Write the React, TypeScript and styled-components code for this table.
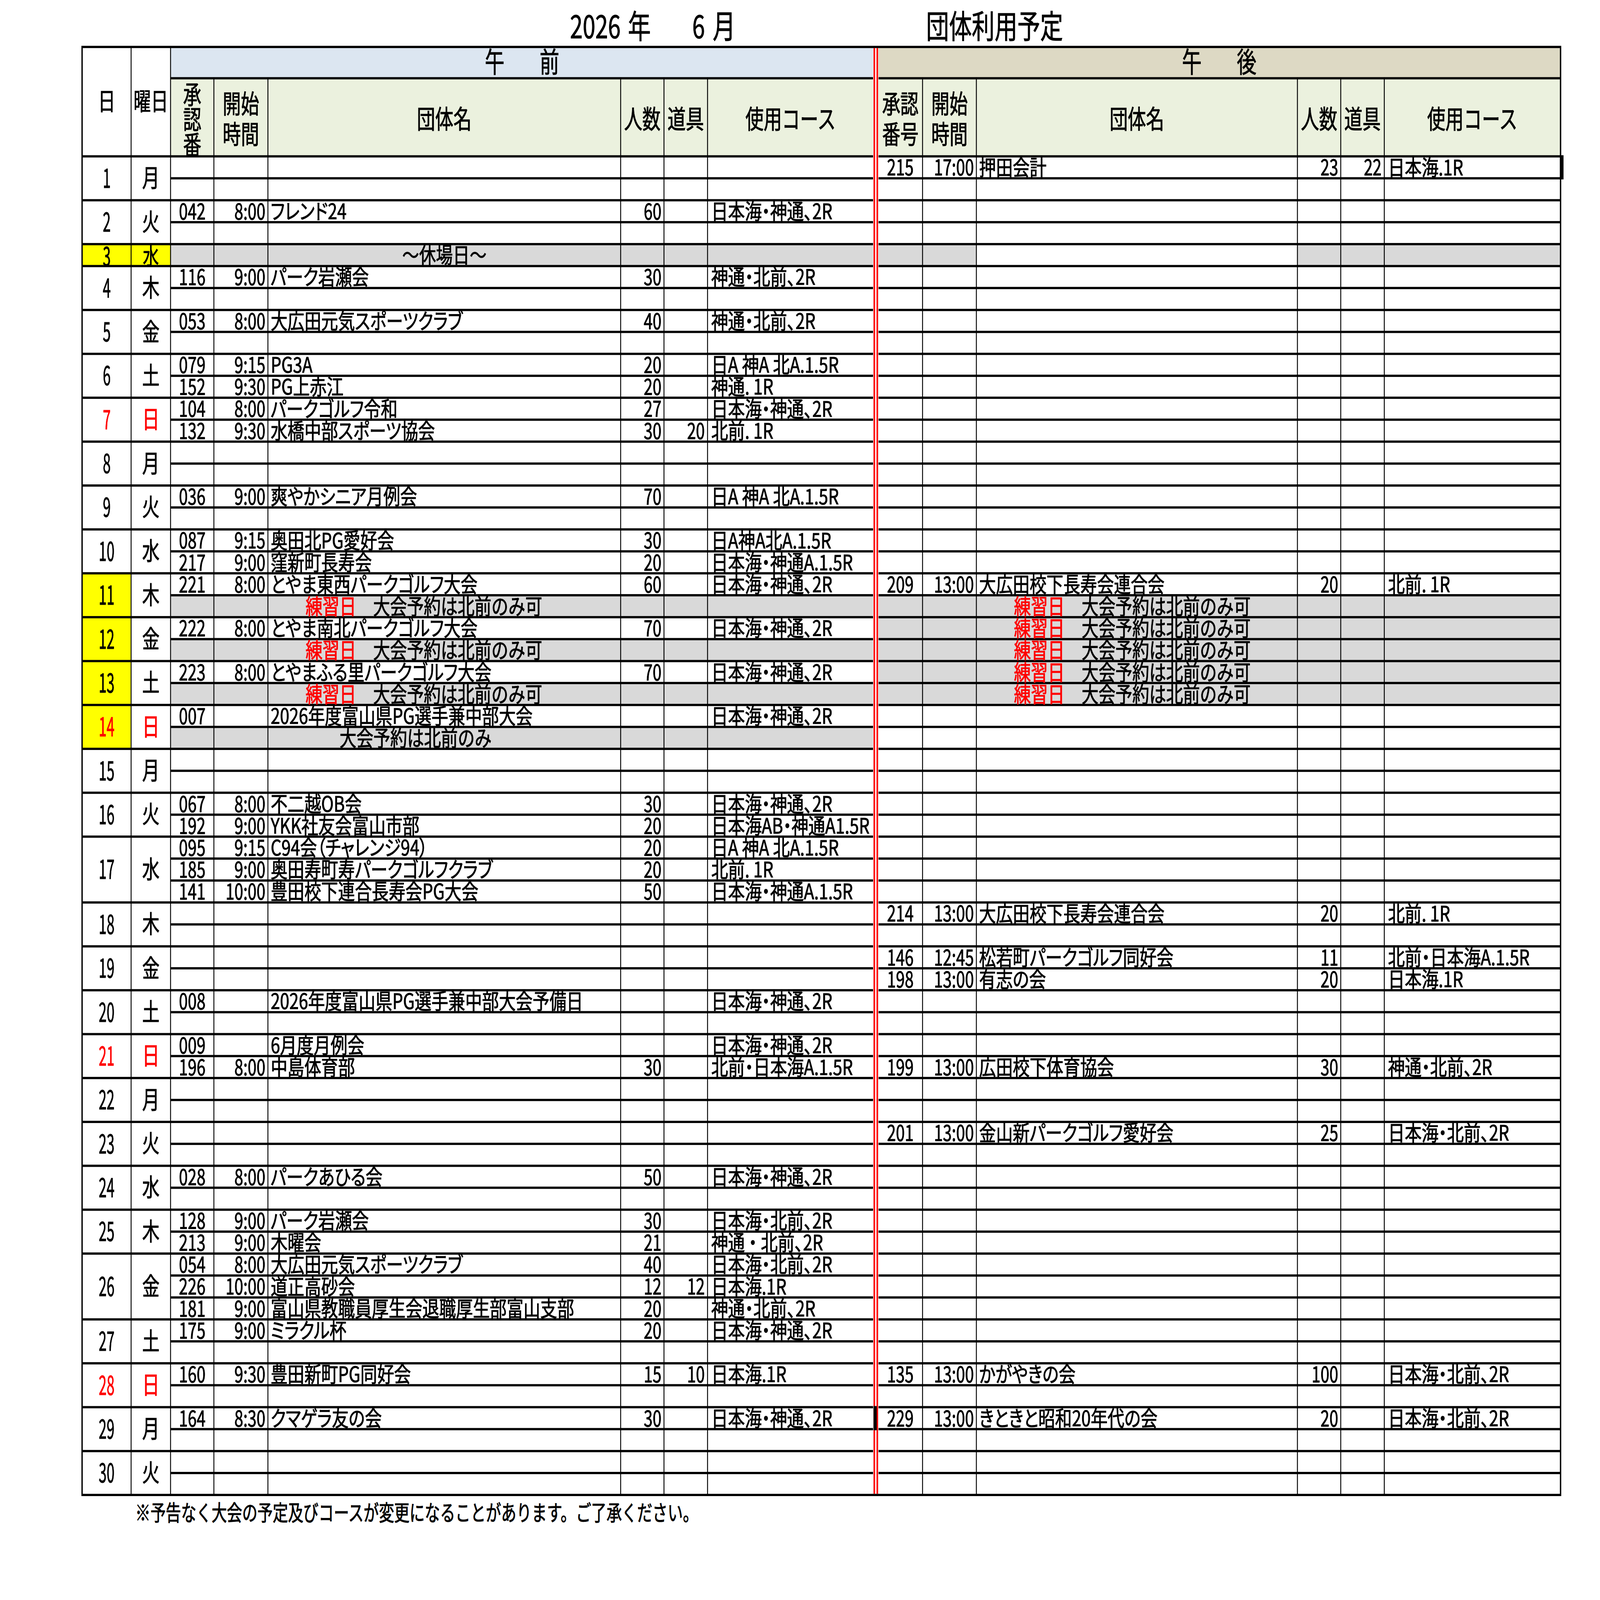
import React from 'react';
import styled, { createGlobalStyle, css } from 'styled-components';

const FONT = `'Noto Sans CJK JP', 'Noto Sans', sans-serif`;
const PAGE_W = 7017;
const PAGE_H = 4958;

const GlobalStyle = createGlobalStyle`
  html, body { margin: 0; padding: 0; background: #ffffff; overflow: hidden; }
  body { font-family: ${FONT}; color: #000000; }
`;

type Kind = 'closed' | 'practice' | 'notice' | 'blank';
interface Entry {
  no?: string;
  time?: string;
  name?: string;
  count?: string;
  tools?: string;
  course?: string;
  kind?: Kind;
  edge?: 'left' | 'right';
}
interface Day {
  d: number;
  w: string;
  am: (Entry | null)[];
  pm: (Entry | null)[];
  mark?: 'num' | 'both';
  red?: boolean;
}

const e = (no: string, time: string, name: string, count: string, tools: string, course: string, edge?: 'left' | 'right'): Entry => ({
  no, time, name, count, tools, course, edge,
});
const P: Entry = { kind: 'practice' };
const N: Entry = { kind: 'notice' };
const X: Entry = { kind: 'closed' };
const G: Entry = { kind: 'blank' };
const _ = null;

const days: Day[] = [
  { d: 1, w: '月', am: [_, _], pm: [e('215', '17:00', '押田会計', '23', '22', '日本海.1R', 'right'), _] },
  { d: 2, w: '火', am: [e('042', '8:00', 'フレンド24', '60', '', '日本海・神通、2R'), _], pm: [_, _] },
  { d: 3, w: '水', mark: 'both', am: [X], pm: [G] },
  { d: 4, w: '木', am: [e('116', '9:00', 'パーク岩瀬会', '30', '', '神通・北前、2R'), _], pm: [_, _] },
  { d: 5, w: '金', am: [e('053', '8:00', '大広田元気スポーツクラブ', '40', '', '神通・北前、2R'), _], pm: [_, _] },
  {
    d: 6, w: '土',
    am: [e('079', '9:15', 'PG3A', '20', '', '日A 神A 北A.1.5R'), e('152', '9:30', 'PG上赤江', '20', '', '神通. 1R')],
    pm: [_, _],
  },
  {
    d: 7, w: '日', red: true,
    am: [e('104', '8:00', 'パークゴルフ令和', '27', '', '日本海・神通、2R'), e('132', '9:30', '水橋中部スポーツ協会', '30', '20', '北前. 1R')],
    pm: [_, _],
  },
  { d: 8, w: '月', am: [_, _], pm: [_, _] },
  { d: 9, w: '火', am: [e('036', '9:00', '爽やかシニア月例会', '70', '', '日A 神A 北A.1.5R'), _], pm: [_, _] },
  {
    d: 10, w: '水',
    am: [e('087', '9:15', '奥田北PG愛好会', '30', '', '日A神A北A.1.5R'), e('217', '9:00', '窪新町長寿会', '20', '', '日本海・神通A.1.5R')],
    pm: [_, _],
  },
  {
    d: 11, w: '木', mark: 'num',
    am: [e('221', '8:00', 'とやま東西パークゴルフ大会', '60', '', '日本海・神通、2R'), P],
    pm: [e('209', '13:00', '大広田校下長寿会連合会', '20', '', '北前. 1R'), P],
  },
  { d: 12, w: '金', mark: 'num', am: [e('222', '8:00', 'とやま南北パークゴルフ大会', '70', '', '日本海・神通、2R'), P], pm: [P, P] },
  { d: 13, w: '土', mark: 'num', am: [e('223', '8:00', 'とやまふる里パークゴルフ大会', '70', '', '日本海・神通、2R'), P], pm: [P, P] },
  { d: 14, w: '日', red: true, mark: 'num', am: [e('007', '', '2026年度富山県PG選手兼中部大会', '', '', '日本海・神通、2R'), N], pm: [_, _] },
  { d: 15, w: '月', am: [_, _], pm: [_, _] },
  {
    d: 16, w: '火',
    am: [e('067', '8:00', '不二越OB会', '30', '', '日本海・神通、2R'), e('192', '9:00', 'YKK社友会富山市部', '20', '', '日本海AB・神通A1.5R')],
    pm: [_, _],
  },
  {
    d: 17, w: '水',
    am: [
      e('095', '9:15', 'C94会（チャレンジ94）', '20', '', '日A 神A 北A.1.5R'),
      e('185', '9:00', '奥田寿町寿パークゴルフクラブ', '20', '', '北前. 1R'),
      e('141', '10:00', '豊田校下連合長寿会PG大会', '50', '', '日本海・神通A.1.5R'),
    ],
    pm: [_, _, _],
  },
  { d: 18, w: '木', am: [_, _], pm: [e('214', '13:00', '大広田校下長寿会連合会', '20', '', '北前. 1R'), _] },
  {
    d: 19, w: '金', am: [_, _],
    pm: [e('146', '12:45', '松若町パークゴルフ同好会', '11', '', '北前・日本海A.1.5R'), e('198', '13:00', '有志の会', '20', '', '日本海.1R')],
  },
  { d: 20, w: '土', am: [e('008', '', '2026年度富山県PG選手兼中部大会予備日', '', '', '日本海・神通、2R'), _], pm: [_, _] },
  {
    d: 21, w: '日', red: true,
    am: [e('009', '', '6月度月例会', '', '', '日本海・神通、2R'), e('196', '8:00', '中島体育部', '30', '', '北前・日本海A.1.5R')],
    pm: [_, e('199', '13:00', '広田校下体育協会', '30', '', '神通・北前、2R')],
  },
  { d: 22, w: '月', am: [_, _], pm: [_, _] },
  { d: 23, w: '火', am: [_, _], pm: [e('201', '13:00', '金山新パークゴルフ愛好会', '25', '', '日本海・北前、2R'), _] },
  { d: 24, w: '水', am: [e('028', '8:00', 'パークあひる会', '50', '', '日本海・神通、2R'), _], pm: [_, _] },
  {
    d: 25, w: '木',
    am: [e('128', '9:00', 'パーク岩瀬会', '30', '', '日本海・北前、2R'), e('213', '9:00', '木曜会', '21', '', '神通 ・ 北前、2R')],
    pm: [_, _],
  },
  {
    d: 26, w: '金',
    am: [
      e('054', '8:00', '大広田元気スポーツクラブ', '40', '', '日本海・北前、2R'),
      e('226', '10:00', '道正高砂会', '12', '12', '日本海.1R'),
      e('181', '9:00', '富山県教職員厚生会退職厚生部富山支部', '20', '', '神通・北前、2R'),
    ],
    pm: [_, _, _],
  },
  { d: 27, w: '土', am: [e('175', '9:00', 'ミラクル杯', '20', '', '日本海・神通、2R'), _], pm: [_, _] },
  {
    d: 28, w: '日', red: true,
    am: [e('160', '9:30', '豊田新町PG同好会', '15', '10', '日本海.1R'), _],
    pm: [e('135', '13:00', 'かがやきの会', '100', '', '日本海・北前、2R'), _],
  },
  {
    d: 29, w: '月',
    am: [e('164', '8:30', 'クマゲラ友の会', '30', '', '日本海・神通、2R'), _],
    pm: [e('229', '13:00', 'きときと昭和20年代の会', '20', '', '日本海・北前、2R', 'left'), _],
  },
  { d: 30, w: '火', am: [_, _], pm: [_, _] },
];

/* ---------- frame ---------- */

const Frame = styled.div`
  position: relative;
  overflow: hidden;
  background: #ffffff;
`;

const Page = styled.div`
  width: ${PAGE_W}px;
  height: ${PAGE_H}px;
  box-sizing: border-box;
  padding-left: 357px;
  font-family: ${FONT};
  overflow: hidden;
  background: #ffffff;
  transform-origin: 0 0;
  -webkit-text-stroke: 1.5px currentColor;
`;

/* ---------- title ---------- */

const TitleRow = styled.div`
  height: 142px;
  box-sizing: border-box;
  padding: 3px 0 0 2143px;
  display: flex;
  align-items: flex-start;
  font-size: 100px;
  line-height: 146px;
  white-space: nowrap;
`;

const DateGroup = styled.div`
  width: 1562px;
  display: flex;
`;

const TitleText = styled.span<{ $gap?: number }>`
  margin-left: ${(p) => p.$gap ?? 0}px;
`;

/* ---------- sheet grid ---------- */

const Sheet = styled.div`
  display: grid;
  width: 6490px;
  box-sizing: border-box;
  grid-template-columns:
    210px 169px
    186px 233px 1543px 186px 187px 724px
    16px
    191px 232px 1404px 186px 187px 768px;
  grid-template-rows: 90px 235px repeat(61, 61px);
  gap: 7px 4px;
  padding: 7px 6px;
  background: #000000;
`;

const Corner = styled.div<{ $col: number }>`
  grid-column: ${(p) => p.$col};
  grid-row: 1 / span 2;
  background: #ffffff;
  display: flex;
  align-items: center;
  justify-content: center;
  padding-bottom: 14px;
  font-size: 76px;
  line-height: 1;
  white-space: nowrap;
`;

const Band = styled.div<{ $pm?: boolean }>`
  grid-row: 1;
  grid-column: ${(p) => (p.$pm ? '10 / 16' : '3 / 9')};
  background: ${(p) => (p.$pm ? '#ddd9c4' : '#dce6f1')};
  display: flex;
  align-items: center;
  justify-content: center;
  gap: 154px;
  padding-bottom: 14px;
  font-size: 86px;
  line-height: 1;
`;

const Divider = styled.div`
  grid-column: 9;
  grid-row: 1 / -1;
  margin: 0 -4px;
  background: #ffffff;
  display: flex;
  justify-content: center;
  &::before {
    content: '';
    width: 0;
    border-left: 20px double #ff0000;
  }
`;

const HeadCell = styled.div`
  background: #ebf1de;
  display: flex;
  flex-direction: column;
  align-items: center;
  justify-content: center;
  font-size: 80px;
  line-height: 95px;
  white-space: nowrap;
`;

const StackHead = styled(HeadCell)`
  justify-content: flex-start;
  padding-top: 2px;
  line-height: 78px;
`;

/* ---------- day cells ---------- */

const DayNum = styled.div<{ $span: number; $yellow: boolean; $red: boolean; $compact: boolean }>`
  grid-row: span ${(p) => p.$span};
  background: ${(p) => (p.$yellow ? '#ffff00' : '#ffffff')};
  color: ${(p) => (p.$red ? '#ff0000' : '#000000')};
  display: flex;
  align-items: center;
  justify-content: center;
  padding-bottom: ${(p) => (p.$compact ? 6 : 14)}px;
  font-size: 84px;
  line-height: 1;
`;

const NumGlyph = styled.span`
  display: inline-block;
  transform: scaleX(0.74);
`;

const Weekday = styled.div<{ $span: number; $yellow: boolean; $red: boolean; $compact: boolean }>`
  grid-row: span ${(p) => p.$span};
  background: ${(p) => (p.$yellow ? '#ffff00' : '#ffffff')};
  color: ${(p) => (p.$red ? '#ff0000' : '#000000')};
  display: flex;
  align-items: center;
  justify-content: center;
  padding-bottom: ${(p) => (p.$compact ? 4 : 14)}px;
  font-size: ${(p) => (p.$compact ? 70 : 76)}px;
  line-height: 1;
`;

/* ---------- data cells ---------- */

type Align = 'start' | 'center' | 'end';

const Cell = styled.div<{ $gray?: boolean; $align?: Align; $padL?: number; $padR?: number; $edge?: 'left' | 'right' }>`
  min-width: 0;
  box-sizing: border-box;
  display: flex;
  align-items: flex-start;
  justify-content: ${(p) => (p.$align === 'center' ? 'center' : p.$align === 'end' ? 'flex-end' : 'flex-start')};
  padding-left: ${(p) => p.$padL ?? 0}px;
  padding-right: ${(p) => p.$padR ?? 0}px;
  background: ${(p) => (p.$gray ? '#d9d9d9' : '#ffffff')};
  font-size: 70px;
  line-height: 52px;
  white-space: nowrap;
  ${(p) =>
    p.$edge === 'left' &&
    css`
      position: relative;
      &::before {
        content: '';
        position: absolute;
        top: -7px;
        bottom: -7px;
        left: -22px;
        width: 14px;
        background: #000000;
      }
    `}
  ${(p) =>
    p.$edge === 'right' &&
    css`
      position: relative;
      &::after {
        content: '';
        position: absolute;
        top: -7px;
        bottom: -7px;
        right: -16px;
        width: 16px;
        background: #000000;
      }
    `}
`;

const TextCell = styled(Cell)`
  font-size: 66px;
  font-feature-settings: 'palt' 1;
`;

const Ink = styled.span<{ $center?: boolean }>`
  display: inline-block;
  transform: scaleX(1.12);
  transform-origin: ${(p) => (p.$center ? 'center' : 'left')} center;
`;

const Notice = styled.span`
  display: inline-block;
  font-size: 68px;
  line-height: 53px;
  font-feature-settings: normal;
  transform: scaleX(1.09);
  transform-origin: left center;
`;

const Red = styled.span`
  color: #ff0000;
`;

const Note = styled.div`
  margin: 13px 0 0 236px;
  font-size: 67px;
  line-height: 67px;
  white-space: nowrap;
`;

/* ---------- building blocks ---------- */

function Heads({ pm }: { pm?: boolean }) {
  return (
    <>
      {pm ? (
        <HeadCell>
          <span>承認</span>
          <span>番号</span>
        </HeadCell>
      ) : (
        <StackHead>
          <span>承</span>
          <span>認</span>
          <span>番</span>
        </StackHead>
      )}
      <HeadCell>
        <span>開始</span>
        <span>時間</span>
      </HeadCell>
      <HeadCell>団体名</HeadCell>
      <HeadCell>人数</HeadCell>
      <HeadCell>道具</HeadCell>
      <HeadCell>使用コース</HeadCell>
    </>
  );
}

function Half({ entry }: { entry: Entry | null }) {
  const kind = entry?.kind;
  const gray = !!kind;
  let nameCell: React.ReactNode;
  if (kind === 'closed') {
    nameCell = (
      <TextCell $gray $align="center">
        <Ink $center>～休場日～</Ink>
      </TextCell>
    );
  } else if (kind === 'practice') {
    nameCell = (
      <TextCell $gray $padL={163}>
        <Notice>
          <Red>練習日</Red>　大会予約は北前のみ可
        </Notice>
      </TextCell>
    );
  } else if (kind === 'notice') {
    nameCell = (
      <TextCell $gray $padL={312}>
        <Notice>大会予約は北前のみ</Notice>
      </TextCell>
    );
  } else {
    nameCell = (
      <TextCell $padL={10}>
        {entry?.name ? <Ink>{entry.name}</Ink> : null}
      </TextCell>
    );
  }
  return (
    <>
      <Cell $gray={gray} $align="center" $edge={entry?.edge === 'left' ? 'left' : undefined}>
        {entry?.no}
      </Cell>
      <Cell $gray={gray} $align="end" $padR={9}>
        {entry?.time}
      </Cell>
      {nameCell}
      <Cell $gray={gray} $align="end" $padR={9}>
        {entry?.count}
      </Cell>
      <Cell $gray={gray} $align="end" $padR={10}>
        {entry?.tools}
      </Cell>
      <TextCell $gray={gray} $padL={14} $edge={entry?.edge === 'right' ? 'right' : undefined}>
        {entry?.course ? <Ink>{entry.course}</Ink> : null}
      </TextCell>
    </>
  );
}

function DayBlock({ day }: { day: Day }) {
  const span = day.am.length;
  const compact = span === 1;
  return (
    <>
      <DayNum $span={span} $yellow={!!day.mark} $red={!!day.red} $compact={compact}>
        <NumGlyph>{day.d}</NumGlyph>
      </DayNum>
      <Weekday $span={span} $yellow={day.mark === 'both'} $red={!!day.red} $compact={compact}>
        {day.w}
      </Weekday>
      {day.am.map((a, i) => (
        <React.Fragment key={i}>
          <Half entry={a} />
          <Half entry={day.pm[i] ?? null} />
        </React.Fragment>
      ))}
    </>
  );
}

export default function App() {
  const vw = typeof window !== 'undefined' ? window.innerWidth : PAGE_W;
  const vh = typeof window !== 'undefined' ? window.innerHeight : PAGE_H;
  const sx = vw / PAGE_W;
  const sy = vh / PAGE_H;
  return (
    <>
      <GlobalStyle />
      <Frame style={{ width: vw, height: vh }}>
        <Page style={{ transform: `scale(${sx}, ${sy})` }}>
          <TitleRow>
            <DateGroup>
              <TitleText>2026</TitleText>
              <TitleText $gap={32}>年</TitleText>
              <TitleText $gap={182}>6</TitleText>
              <TitleText $gap={34}>月</TitleText>
            </DateGroup>
            <TitleText>団体利用予定</TitleText>
          </TitleRow>
          <Sheet>
            <Corner $col={1}>日</Corner>
            <Corner $col={2}>曜日</Corner>
            <Band>
              <span>午</span>
              <span>前</span>
            </Band>
            <Divider />
            <Band $pm>
              <span>午</span>
              <span>後</span>
            </Band>
            <Heads />
            <Heads pm />
            {days.map((d) => (
              <DayBlock key={d.d} day={d} />
            ))}
          </Sheet>
          <Note>※予告なく大会の予定及びコースが変更になることがあります。ご了承ください。</Note>
        </Page>
      </Frame>
    </>
  );
}
